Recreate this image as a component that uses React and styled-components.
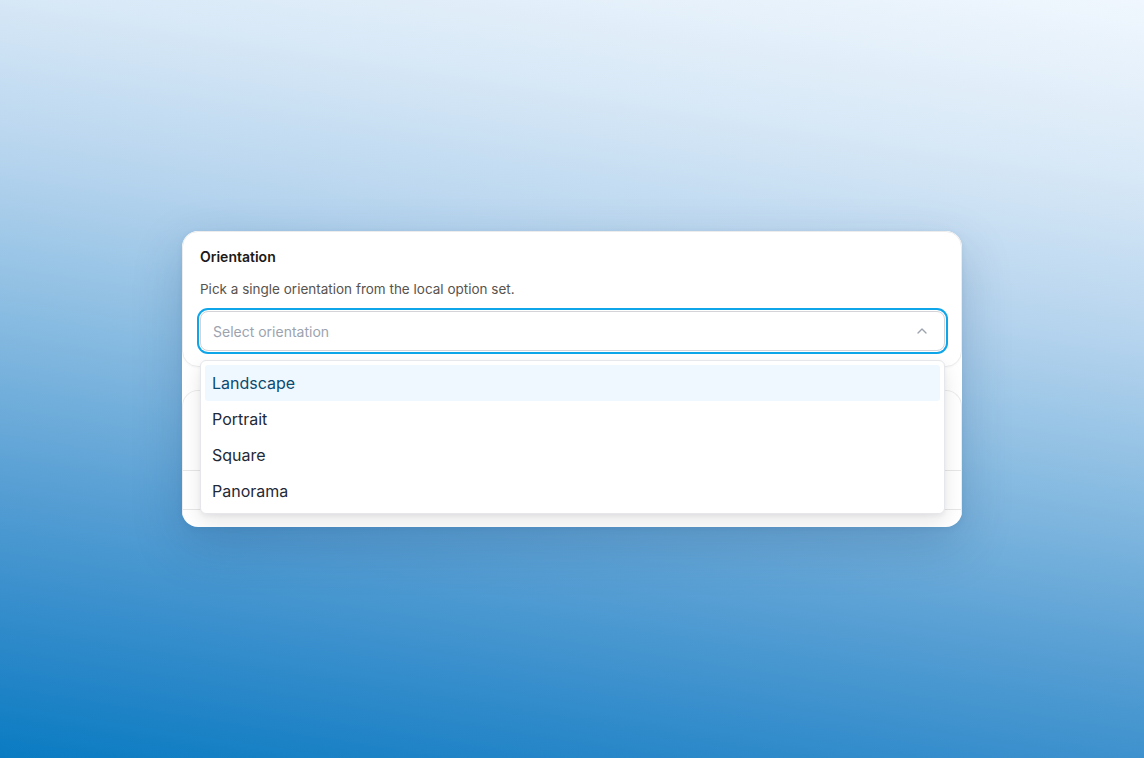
import React, { useState } from 'react';
import styled, { createGlobalStyle } from 'styled-components';
import { ChevronUp } from 'lucide-react';

const GlobalStyle = createGlobalStyle`
  html, body {
    margin: 0;
    padding: 0;
    height: 100%;
  }
  body {
    font-family: Inter, "Noto Sans", "Liberation Sans", sans-serif;
    -webkit-font-smoothing: antialiased;
  }
  #root {
    height: 100%;
  }
`;

const Page = styled.div`
  height: 100vh;
  display: flex;
  align-items: center;
  justify-content: center;
  background: linear-gradient(189deg, #f0f7fe 0%, #d9e9f7 18%, #b6d4ee 36%, #8bbde2 52%, #549dd3 72%, #2b88c9 88%, #0a7bc2 100%);
`;

const Card = styled.div`
  width: 780px;
  height: 296px;
  background: #fff;
  border-radius: 16px;
  box-shadow: 0 18px 50px rgba(20, 60, 110, 0.22), 0 2px 6px rgba(20, 60, 110, 0.08);
  overflow: hidden;
  display: flex;
  flex-direction: column;
`;

const FieldSection = styled.section`
  position: relative;
  padding: 15px 16px 15px 17px;
  border: 1px solid #ececec;
  border-radius: 16px;
  background: #fff;
  box-shadow: 0 1px 2px rgba(0, 0, 0, 0.03);
  display: flex;
  flex-direction: column;
  z-index: 2;
`;

const Label = styled.label`
  font-size: 14px;
  line-height: 20px;
  font-weight: 600;
  color: #1c1917;
`;

const Hint = styled.p`
  margin: 12px 0 12px;
  font-size: 13.5px;
  line-height: 20px;
  color: #57534e;
`;

const SelectWrap = styled.div`
  position: relative;
`;

const Trigger = styled.button`
  width: 100%;
  height: 40px;
  display: flex;
  align-items: center;
  justify-content: space-between;
  padding: 0 14px 0 12px;
  border: 1px solid #d4d4d8;
  border-radius: 8px;
  background: #fff;
  box-shadow: 0 0 0 1px #fff, 0 0 0 3px #0ea5e9;
  font-family: inherit;
  font-size: 14px;
  color: #9ca3af;
  cursor: pointer;
  outline: none;
`;

const Menu = styled.ul`
  position: absolute;
  top: 49px;
  left: 0;
  right: 0;
  margin: 0;
  padding: 4px;
  list-style: none;
  background: #fff;
  border: 1px solid #e5e7eb;
  border-radius: 6px;
  box-shadow: 0 8px 20px rgba(15, 23, 42, 0.1), 0 2px 4px rgba(15, 23, 42, 0.05);
  z-index: 10;
`;

const Option = styled.li`
  height: 36px;
  display: flex;
  align-items: center;
  padding: 0 7px;
  border-radius: 3px;
  font-size: 16px;
  color: ${p => (p.$active ? '#0c4a6e' : '#1f2937')};
  background: ${p => (p.$active ? '#f0f8ff' : 'transparent')};
  cursor: pointer;
`;

const ListSection = styled.section`
  margin-top: 23px;
  border: 1px solid #ececec;
  border-bottom: none;
  border-radius: 16px 16px 0 0;
  display: flex;
  flex-direction: column;
  flex: 1;
`;

const Row = styled.div`
  height: ${p => p.$h}px;
  border-bottom: 1px solid #e7e7e7;
`;

const options = ['Landscape', 'Portrait', 'Square', 'Panorama'];

export default function App() {
  const [active, setActive] = useState(0);

  return (
    <>
      <GlobalStyle />
      <Page>
        <Card>
          <FieldSection>
            <Label>Orientation</Label>
            <Hint>Pick a single orientation from the local option set.</Hint>
            <SelectWrap>
              <Trigger type="button">
                <span>Select orientation</span>
                <ChevronUp size={16} strokeWidth={2} color="#9ca3af" />
              </Trigger>
              <Menu role="listbox">
                {options.map((o, i) => (
                  <Option
                    key={o}
                    $active={i === active}
                    onMouseEnter={() => setActive(i)}
                  >
                    {o}
                  </Option>
                ))}
              </Menu>
            </SelectWrap>
          </FieldSection>
          <ListSection>
            <Row $h={79} />
            <Row $h={38} />
          </ListSection>
        </Card>
      </Page>
    </>
  );
}
